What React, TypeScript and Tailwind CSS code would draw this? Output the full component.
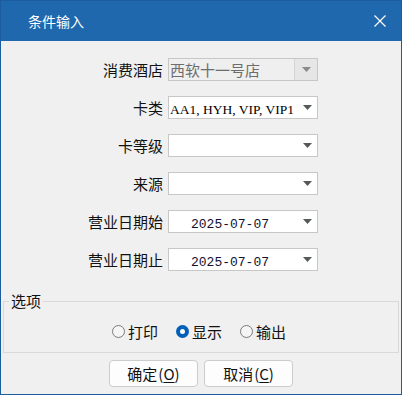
import React from 'react';

const cjk = { fontFamily: '"Microsoft YaHei", "Noto Sans CJK SC", sans-serif' };

const Arrow: React.FC<{ dim?: boolean }> = ({ dim }) => (
  <svg width="9" height="5" viewBox="0 0 9 5" className="block">
    <path d="M0 0 H9 L4.5 5 Z" fill={dim ? '#8a8a8a' : '#55595c'} />
  </svg>
);

const Field: React.FC<{ label: string; children?: React.ReactNode; disabled?: boolean }> = ({ label, children, disabled }) => (
  <div className="flex items-center h-[23px]">
    <div className="w-[167px] pr-[5px] text-right text-[15px] text-[#111] leading-none" style={cjk}>
      {label}
    </div>
    <div
      className={`w-[150px] h-[23px] border border-[#c7c7c7] flex items-center ${disabled ? 'bg-[#efefef]' : 'bg-white'}`}
    >
      <div className="flex-1 min-w-0 overflow-hidden whitespace-nowrap pl-[1px]">{children}</div>
      {disabled ? (
        <div className="w-[23px] h-full border-l border-[#d6d6d6] bg-[#e6e6e6] flex items-center justify-center">
          <Arrow dim />
        </div>
      ) : (
        <div className="w-[20px] h-full flex items-center justify-center">
          <Arrow />
        </div>
      )}
    </div>
  </div>
);

const Radio: React.FC<{ label: string; checked?: boolean }> = ({ label, checked }) => (
  <div className="flex items-center">
    {checked ? (
      <span className="w-[13px] h-[13px] rounded-full bg-[#005fb8] flex items-center justify-center">
        <span className="w-[5px] h-[5px] rounded-full bg-white" />
      </span>
    ) : (
      <span className="w-[13px] h-[13px] rounded-full border border-[#7a7a7a] bg-[#f5f5f5]" />
    )}
    <span className="ml-[3px] text-[15px] text-[#111] leading-none" style={cjk}>
      {label}
    </span>
  </div>
);

const Btn: React.FC<{ label: string; key2: string }> = ({ label, key2 }) => (
  <button className="w-[89px] h-[27px] rounded-[4px] border border-[#cccccc] bg-[#fdfdfd] flex items-center justify-center text-[15px] text-[#111] leading-none" style={cjk}>
    {label}
    <span className="ml-[1px]">
      (<span className="underline underline-offset-2">{key2}</span>)
    </span>
  </button>
);

export default function App() {
  return (
    <div className="w-[402px] h-[395px] border border-[#1b5d9e] bg-[#f0f0f0] flex flex-col">
      <div className="h-[40px] bg-[#2068ae] flex items-center justify-between pl-[27px] pr-[15px]">
        <span className="text-white text-[14px] leading-none" style={cjk}>条件输入</span>
        <svg width="12" height="12" viewBox="0 0 12 12">
          <path d="M0.5 0.5 L11.5 11.5 M11.5 0.5 L0.5 11.5" stroke="#fff" strokeWidth="1.2" />
        </svg>
      </div>

      <div className="flex flex-col gap-[15px] pt-[17px]">
        <Field label="消费酒店" disabled>
          <span className="text-[15px] text-[#6d6d6d] leading-none" style={cjk}>西软十一号店</span>
        </Field>
        <Field label="卡类">
          <span className="text-[13.5px] text-black leading-none" style={{ fontFamily: '"Liberation Serif", "SimSun", serif' }}>
            AA1, HYH, VIP, VIP1
          </span>
        </Field>
        <Field label="卡等级" />
        <Field label="来源" />
        <Field label="营业日期始">
          <span className="pl-[21px] text-[13px] text-[#101030] leading-none" style={{ fontFamily: '"Liberation Mono", monospace' }}>
            2025-07-07
          </span>
        </Field>
        <Field label="营业日期止">
          <span className="pl-[21px] text-[13px] text-[#101030] leading-none" style={{ fontFamily: '"Liberation Mono", monospace' }}>
            2025-07-07
          </span>
        </Field>
      </div>

      <fieldset className="mx-[2px] mt-[20px] h-[62px] border border-[#d9d9d9] px-0">
        <legend className="ml-[5px] px-[2px] text-[15px] text-[#111] leading-[20px]" style={cjk}>选项</legend>
        <div className="flex items-center justify-center gap-[18px] pt-[13px] pr-[4px]">
          <Radio label="打印" />
          <Radio label="显示" checked />
          <Radio label="输出" />
        </div>
      </fieldset>

      <div className="flex justify-center gap-[6px] mt-[7px]">
        <Btn label="确定" key2="O" />
        <Btn label="取消" key2="C" />
      </div>
    </div>
  );
}
